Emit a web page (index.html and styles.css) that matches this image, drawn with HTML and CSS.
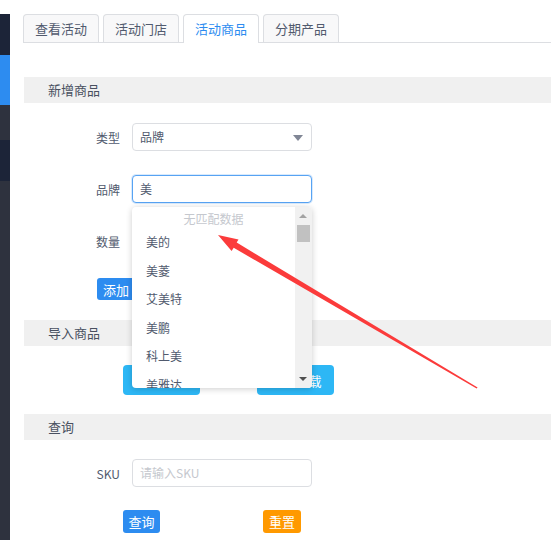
FILE: index.html
```html
<!DOCTYPE html>
<html lang="zh">
<head>
<meta charset="utf-8">
<title>活动商品</title>
<link rel="stylesheet" href="styles.css">
</head>
<body>
<div class="page">
  <aside class="sidebar">
    <div class="sb sb-navy sb-a"></div>
    <div class="sb sb-blue"></div>
    <div class="sb sb-gray sb-b"></div>
    <div class="sb sb-navy sb-c"></div>
    <div class="sb sb-gray sb-rest"></div>
  </aside>
  <main class="main">
    <nav class="tabs">
      <div class="tab">查看活动</div>
      <div class="tab">活动门店</div>
      <div class="tab active">活动商品</div>
      <div class="tab">分期产品</div>
    </nav>

    <div class="section-head first">新增商品</div>
    <div class="form">
      <div class="row">
        <label class="lbl">类型</label>
        <div class="field select">品牌<span class="caret"></span></div>
      </div>
      <div class="row">
        <label class="lbl">品牌</label>
        <div class="field-wrap">
          <div class="field focus">美</div>
          <div class="dropdown">
            <div class="dd-list">
              <div class="dd-empty">无匹配数据</div>
              <div class="dd-item">美的</div>
              <div class="dd-item">美菱</div>
              <div class="dd-item">艾美特</div>
              <div class="dd-item">美鹏</div>
              <div class="dd-item">科上美</div>
              <div class="dd-item">美雅达</div>
            </div>
            <div class="dd-scroll">
              <span class="sc-up"></span>
              <span class="sc-thumb"></span>
              <span class="sc-down"></span>
            </div>
          </div>
        </div>
      </div>
      <div class="row">
        <label class="lbl">数量</label>
        <div class="field"></div>
      </div>
      <div class="btn-row add-row">
        <button class="btn btn-blue btn-add">添加</button>
      </div>
    </div>

    <div class="section-head">导入商品</div>
    <div class="import-row">
      <button class="btn btn-cyan btn-import">导入商品</button>
      <button class="btn btn-cyan btn-import">模板下载</button>
    </div>

    <div class="section-head">查询</div>
    <div class="form query">
      <div class="row">
        <label class="lbl">SKU</label>
        <div class="field placeholder">请输入SKU</div>
      </div>
      <div class="query-btns">
        <button class="btn btn-blue btn-q">查询</button>
        <button class="btn btn-orange btn-q">重置</button>
      </div>
    </div>
  </main>

  <svg class="arrow" width="551" height="540" viewBox="0 0 551 540">
    <polygon points="218,235 238.5,239.4 236.7,242.6 477.6,387.6 476.6,388.6 233.7,247.8 231.6,251" fill="#fb3b3b"/>
  </svg>
</div>
</body>
</html>
```

FILE: styles.css
```css
html, body {
  margin: 0;
  padding: 0;
  background: #fff;
}

body {
  font-family: "Noto Sans CJK SC", "Liberation Sans", sans-serif;
  font-size: 12px;
  color: #515a6e;
}

.page {
  position: relative;
  display: flex;
  width: 551px;
  height: 540px;
  overflow: hidden;
}

.sidebar {
  width: 10px;
  flex: none;
  margin-top: 14px;
  display: flex;
  flex-direction: column;
}

.sb { width: 10px; }
.sb-navy { background: #1c2438; }
.sb-blue { background: #2d8cf0; height: 50px; }
.sb-gray { background: #2e323e; }
.sb-a { height: 41px; }
.sb-b { height: 35px; }
.sb-c { height: 41px; }
.sb-rest { flex: 1; }

.main {
  flex: 1;
  padding: 14px 0 0 13px;
  min-width: 0;
}

/* tabs */
.tabs {
  display: flex;
  gap: 4px;
  border-bottom: 1px solid #dcdee2;
  height: 28px;
  align-items: flex-end;
}

.tab {
  height: 28px;
  line-height: 27px;
  padding: 0 11px;
  font-size: 13px;
  color: #515a6e;
  background: #f8f8f9;
  border: 1px solid #dcdee2;
  border-bottom: none;
  border-radius: 4px 4px 0 0;
  box-sizing: border-box;
}

.tab.active {
  background: #fff;
  color: #2d8cf0;
  height: 29px;
  margin-bottom: -1px;
  line-height: 28px;
}

/* section heads */
.section-head {
  margin-left: 1px;
  height: 26px;
  line-height: 26px;
  padding-left: 24px;
  background: #f0f0f0;
  font-size: 13px;
  color: #495060;
  margin-top: 19px;
}

.section-head.first {
  margin-top: 34px;
}

/* forms */
.form {
  padding-top: 20px;
}

.form.query {
  padding-top: 19px;
}

.row {
  display: flex;
  align-items: center;
  height: 28px;
  margin-bottom: 24px;
}

.lbl {
  width: 108px;
  padding-right: 12px;
  box-sizing: border-box;
  text-align: right;
  margin-left: 1px;
  font-size: 12px;
  color: #515a6e;
}

.field-wrap {
  position: relative;
}

.field {
  position: relative;
  width: 180px;
  height: 28px;
  box-sizing: border-box;
  border: 1px solid #dcdee2;
  border-radius: 4px;
  padding: 0 7px;
  line-height: 26px;
  font-size: 12px;
  color: #515a6e;
  background: #fff;
}

.field.focus {
  border-color: #57a3f3;
  box-shadow: 0 0 0 1px rgba(45, 140, 240, 0.18);
}

.field.placeholder {
  color: #c5c8ce;
}

.caret {
  position: absolute;
  right: 8px;
  top: 11px;
  width: 0;
  height: 0;
  border-left: 5px solid transparent;
  border-right: 5px solid transparent;
  border-top: 6px solid #808695;
}

/* dropdown overlay */
.dropdown {
  position: absolute;
  left: 0;
  top: 32px;
  width: 180px;
  height: 181px;
  background: #fff;
  border-radius: 4px;
  box-shadow: 0 1px 6px rgba(0, 0, 0, 0.2);
  display: flex;
  overflow: hidden;
  z-index: 5;
}

.dd-list {
  flex: 1;
  overflow: hidden;
}

.dd-empty {
  height: 21px;
  line-height: 24px;
  text-align: center;
  color: #c5c8ce;
  font-size: 12px;
}

.dd-item {
  height: 28.6px;
  line-height: 28.6px;
  padding-left: 14px;
  color: #515a6e;
  font-size: 12px;
}

.dd-scroll {
  position: relative;
  width: 17px;
  flex: none;
  background: #f1f1f1;
}

.sc-up {
  position: absolute;
  left: 4px;
  top: 7px;
  width: 0;
  height: 0;
  border-left: 4px solid transparent;
  border-right: 4px solid transparent;
  border-bottom: 4px solid #a3a3a3;
}

.sc-thumb {
  position: absolute;
  left: 2px;
  top: 18px;
  width: 13px;
  height: 17px;
  background: #c1c1c1;
}

.sc-down {
  position: absolute;
  left: 4px;
  bottom: 7px;
  width: 0;
  height: 0;
  border-left: 4px solid transparent;
  border-right: 4px solid transparent;
  border-top: 4px solid #505050;
}

/* buttons */
.btn {
  border: none;
  margin: 0;
  padding: 0;
  font-family: inherit;
  color: #fff;
  font-size: 12px;
  border-radius: 3px;
  cursor: pointer;
}

.btn-blue { background: #2d8cf0; }
.btn-cyan { background: #2db7f5; }
.btn-orange { background: #ff9900; }

.btn-row {
  display: flex;
}

.add-row {
  margin-top: -1px;
  padding-left: 74px;
  margin-bottom: 20px;
}

.btn-add {
  width: 38px;
  height: 22px;
  font-size: 13px;
}

.import-row {
  display: flex;
  gap: 57px;
  padding: 19px 0 0 100px;
}

.btn-import {
  width: 77px;
  height: 30px;
  font-size: 13px;
  border-radius: 4px;
}

.query-btns {
  display: flex;
  gap: 103px;
  padding-left: 100px;
  margin-top: -1px;
}

.btn-q {
  width: 37px;
  height: 23px;
  font-size: 13px;
}

.btn-orange.btn-q { width: 38px; }

/* annotation arrow overlay */
.arrow {
  position: absolute;
  left: 0;
  top: 0;
  pointer-events: none;
  z-index: 10;
}
```
